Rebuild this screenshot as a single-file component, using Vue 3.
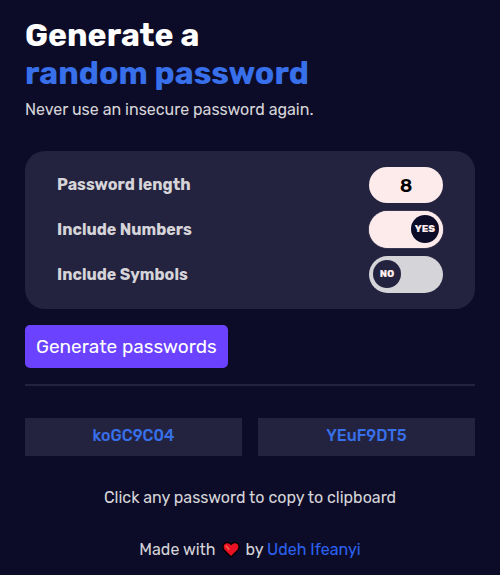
<script setup>
import { ref } from 'vue'

const length = ref(8)
const numbers = ref(true)
const symbols = ref(false)
const passwords = ref(['koGC9C04', 'YEuF9DT5'])

const letters = 'ABCDEFGHIJKLMNOPQRSTUVWXYZabcdefghijklmnopqrstuvwxyz'

function makePassword() {
  const pool = letters + (numbers.value ? '0123456789' : '') + (symbols.value ? '!@#$%^&*?' : '')
  return Array.from({ length: Number(length.value) || 8 }, () => pool[Math.floor(Math.random() * pool.length)]).join('')
}

function generate() {
  passwords.value = [makePassword(), makePassword()]
}

function copy(text) {
  navigator.clipboard?.writeText(text)
}
</script>

<template>
  <main class="page">
    <header>
      <h1 class="title">Generate a <span class="accent">random password</span></h1>
      <p class="subtitle">Never use an insecure password again.</p>
    </header>

    <section class="options">
      <div class="row">
        <label for="length">Password length</label>
        <input id="length" v-model="length" class="length" type="text" inputmode="numeric" />
      </div>
      <div class="row">
        <label for="numbers">Include Numbers</label>
        <span class="switch">
          <input id="numbers" v-model="numbers" class="track" type="checkbox" />
          <span class="knob">{{ numbers ? 'YES' : 'NO' }}</span>
        </span>
      </div>
      <div class="row">
        <label for="symbols">Include Symbols</label>
        <span class="switch">
          <input id="symbols" v-model="symbols" class="track" type="checkbox" />
          <span class="knob">{{ symbols ? 'YES' : 'NO' }}</span>
        </span>
      </div>
    </section>

    <button class="generate" type="button" @click="generate">Generate passwords</button>

    <hr class="divider" />

    <section class="results">
      <button v-for="(p, i) in passwords" :key="i" class="password" type="button" @click="copy(p)">{{ p }}</button>
    </section>

    <p class="hint">Click any password to copy to clipboard</p>

    <footer class="footer">
      Made with
      <svg class="heart" viewBox="0 0 18 18" role="img" aria-label="love">
        <path d="M9 16 2.2 9.2C.4 7.2.5 4.200 2.300 2.600 4.200.9 7.200 1.200 9 3.400 10.800 1.200 13.800.9 15.700 2.600 17.500 4.200 17.600 7.200 15.800 9.200Z" fill="#e81224" stroke="#000" stroke-width="1.400" stroke-linejoin="round" />
        <path d="M4.300 5 6.800 8.200" stroke="#f4694c" stroke-width="1.500" stroke-linecap="round" />
      </svg>
      by <a class="author" href="#">Udeh Ifeanyi</a>
    </footer>
  </main>
</template>

<style>
body {
  margin: 0;
  background: #0d0c28;
}
</style>

<style scoped>
.page {
  box-sizing: border-box;
  padding: 16px 25px;
  color: #d5d4d8;
  font-family: Rubik, Inter, sans-serif;
  font-size: 16px;
  line-height: 19px;
}

.title {
  margin: 0;
  color: #fff;
  font-size: 32px;
  font-weight: 700;
  line-height: 38px;
}

.accent {
  display: block;
  color: #3770ea;
}

.subtitle {
  margin: 8px 0 32px;
}

.options {
  display: flex;
  flex-direction: column;
  gap: 8px;
  padding: 16px 32px;
  border-radius: 20px;
  background: #24233f;
}

.row {
  display: flex;
  align-items: center;
  justify-content: space-between;
  font-weight: 700;
}

.row label {
  padding-bottom: 1px;
}

.length {
  box-sizing: border-box;
  width: 74px;
  height: 36px;
  padding: 0;
  border: 0;
  border-radius: 18px;
  background: #fcebea;
  color: #000;
  font: inherit;
  font-size: 19px;
  font-weight: 600;
  text-align: center;
}

.switch {
  display: grid;
}

.track {
  grid-area: 1 / 1;
  appearance: none;
  width: 74px;
  height: 37px;
  margin: 0;
  border-radius: 19px;
  background: #d5d4d8;
  cursor: pointer;
}

.track:checked {
  background: #fcebea;
  box-shadow: 0 0 1px #fcebea;
}

.knob {
  grid-area: 1 / 1;
  display: flex;
  align-items: center;
  justify-content: center;
  width: 28px;
  height: 28px;
  margin: 4px;
  border-radius: 50%;
  background: #24233f;
  color: #fcebea;
  font-size: 10px;
  font-weight: 800;
  line-height: 12px;
  pointer-events: none;
}

.track:checked + .knob {
  justify-self: end;
  background: #0d0c28;
}

.generate {
  display: block;
  margin: 16px 0;
  padding: 10px 11px;
  border: 0;
  border-radius: 5px;
  background: #6a42ff;
  color: #fff;
  font: inherit;
  font-size: 19px;
  line-height: 23px;
  cursor: pointer;
}

.divider {
  height: 2px;
  margin: 0 0 32px;
  border: 0;
  background: #24233f;
}

.results {
  display: grid;
  grid-template-columns: 1fr 1fr;
  gap: 16px;
}

.password {
  padding: 8px 8px 11px;
  border: 0;
  background: #24233f;
  color: #3770ea;
  font: inherit;
  font-weight: 500;
  cursor: pointer;
}

.hint {
  margin: 32px 0;
  text-align: center;
}

.footer {
  line-height: 21px;
  text-align: center;
}

.heart {
  width: 18px;
  height: 18px;
  margin: 0 2px;
  vertical-align: -4px;
}

.author {
  color: #2b62f0;
  text-decoration: none;
}
</style>
